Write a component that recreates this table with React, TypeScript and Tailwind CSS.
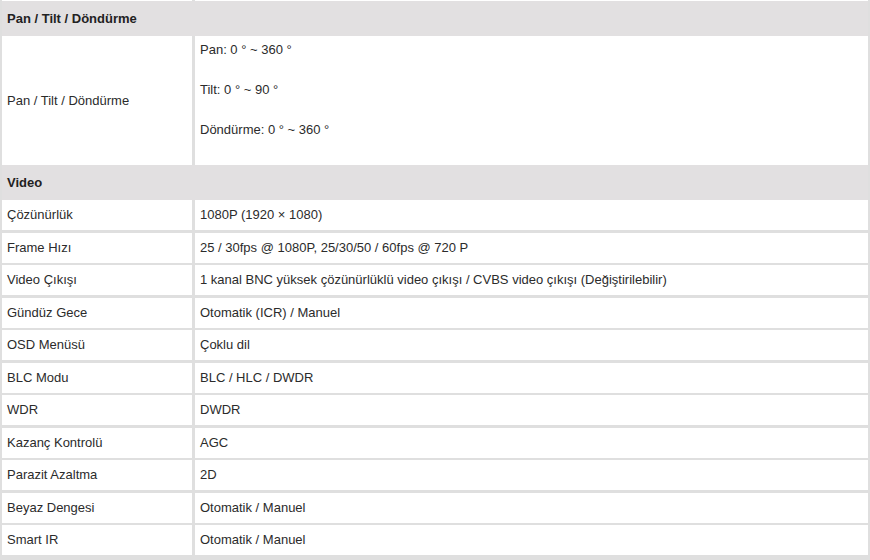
const videoRows: [string, string][] = [
  ["Çözünürlük", "1080P (1920 × 1080)"],
  ["Frame Hızı", "25 / 30fps @ 1080P, 25/30/50 / 60fps @ 720 P"],
  ["Video Çıkışı", "1 kanal BNC yüksek çözünürlüklü video çıkışı / CVBS video çıkışı (Değiştirilebilir)"],
  ["Gündüz Gece", "Otomatik (ICR) / Manuel"],
  ["OSD Menüsü", "Çoklu dil"],
  ["BLC Modu", "BLC / HLC / DWDR"],
  ["WDR", "DWDR"],
  ["Kazanç Kontrolü", "AGC"],
  ["Parazit Azaltma", "2D"],
  ["Beyaz Dengesi", "Otomatik / Manuel"],
  ["Smart IR", "Otomatik / Manuel"],
];

const SectionHeader = ({ title }: { title: string }) => (
  <div className="flex h-[35px] items-center bg-[#e2e0e1] pl-[5px] text-[13px] font-bold text-[#222]">
    {title}
  </div>
);

const Row = ({ label, value }: { label: string; value: string }) => (
  <div className="flex h-[30px] gap-[3px]">
    <div className="flex w-[190px] items-center bg-white pl-[5px]">{label}</div>
    <div className="flex flex-1 items-center bg-white pl-[5px]">{value}</div>
  </div>
);

export default function App() {
  return (
    <div className="h-[560px] w-[870px] overflow-hidden bg-[#dfdfdf] px-[2px] font-['Liberation_Sans',Arial,sans-serif] text-[13px] text-[#2b2b2b]">
      <div className="flex h-px gap-[3px]">
        <div className="w-[190px] bg-white" />
        <div className="flex-1 bg-white" />
      </div>

      <SectionHeader title="Pan / Tilt / Döndürme" />
      <div className="flex h-[129px] gap-[3px]">
        <div className="flex w-[190px] items-center bg-white pl-[5px]">Pan / Tilt / Döndürme</div>
        <div className="flex flex-1 flex-col gap-[25px] bg-white pl-[5px] pt-[6px] leading-[15px]">
          <p>Pan: 0 ° ~ 360 °</p>
          <p>Tilt: 0 ° ~ 90 °</p>
          <p>Döndürme: 0 ° ~ 360 °</p>
        </div>
      </div>

      <SectionHeader title="Video" />
      <div className="flex flex-col gap-[2.5px]">
        {videoRows.map(([label, value]) => (
          <Row key={label} label={label} value={value} />
        ))}
      </div>
    </div>
  );
}
